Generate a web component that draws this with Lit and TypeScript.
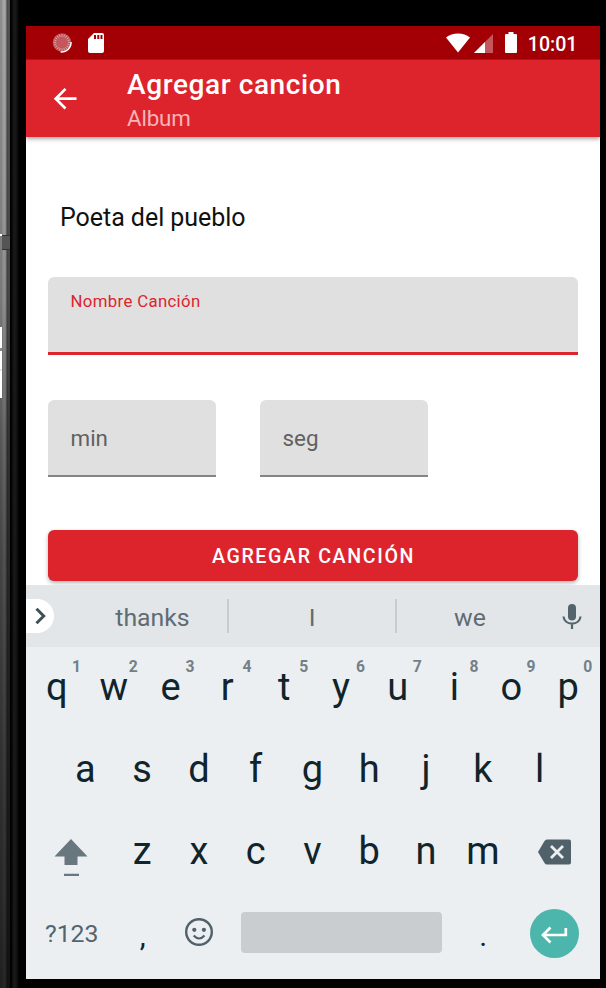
import { LitElement, html, css, svg } from "lit";
import { customElement, property } from "lit/decorators.js";

@customElement("phone-bezel")
class PhoneBezel extends LitElement {
  static styles = css`
    :host { display: block; position: relative; height: 988px; overflow: hidden;
      background: linear-gradient(90deg, #000 0 11px, #1a1a1a 14px, #161616 16px, #000 19px); }
    .metal { width: 10px; height: 988px;
      background: linear-gradient(180deg, #a6a6a6 0, #9a9a9a 180px, #8d8d8d 300px, #686868 430px, #505050 560px, #3a3a3a 750px, #262626 988px); }
    .shade { width: 10px; height: 988px;
      background: linear-gradient(90deg, rgba(0,0,0,.15) 0 2px, rgba(0,0,0,0) 3px 5px, rgba(0,0,0,.15) 6px, rgba(0,0,0,.55) 7px 8px, rgba(0,0,0,.45) 9px, rgba(0,0,0,.6) 10px); }
    .seam { position: absolute; left: 2px; top: 235px; width: 8px; height: 13px; background: #555;
      border-top: 1px solid #333; border-bottom: 1px solid #333; }
    .notch { position: absolute; left: 0; top: 327px; width: 2px; height: 71px; background: #fff; }
    .tick { position: absolute; left: 0; top: 348px; width: 2px; height: 3px; background: #888; }
    .tick.faint { top: 369px; height: 2px; background: #e6e6e6; }
    .dot { position: absolute; left: 0; top: 234px; width: 2px; height: 2px; background: #fff; }
  `;
  render() {
    return html`<div class="metal"><div class="shade"></div></div>
      <div class="seam"></div><div class="dot"></div><div class="notch"></div><div class="tick"></div><div class="tick faint"></div>`;
  }
}

@customElement("status-bar")
class StatusBar extends LitElement {
  static styles = css`
    :host { display: flex; height: 33px; background: #a30005; align-items: center; padding: 0 22.500px 0 26px;
      border-bottom: 1px solid #bd1217; box-sizing: content-box; color: #fff; font: 500 19.600px/33px Roboto, sans-serif; }
    svg { display: block; flex: none; }
    .sync { margin-right: 15px; }
    .wifi { margin: 0 3.500px 0 auto; }
    .cell { margin-right: 12px; }
    .batt { margin-right: 11px; }
    .time { height: 33px; padding-top: 2px; box-sizing: border-box; }
  `;
  render() {
    const rays = Array.from({ length: 20 }, (_, i) => svg`<line x1="10" y1="1.2" x2="10" y2="3.6" transform="rotate(${i * 18} 10 9.5)"/>`);
    return html`
      <svg class="sync" width="20" height="20" viewBox="0 0 20 20">
        <circle cx="10" cy="9.500" r="9.300" fill="#c3575b"/>
        <g stroke="#dda3a5" stroke-width=".9">${rays}</g>
        <path d="M19 9A9.300 9.300 0 0 1 8.500 18.900" fill="none" stroke="#fff" stroke-width="1.400"/>
      </svg>
      <svg width="18" height="20" viewBox="0 0 18 20"><path fill="#fff" fill-rule="evenodd" d="M7 0h8q2 0 2 2v16q0 2-2 2H3q-2 0-2-2V6zM7 2v4h2V2zm3.300 0v4h2V2zm3.200 0v4h2V2z"/></svg>
      <svg class="wifi" width="24" height="20" viewBox="0 0 24 20"><path fill="#fff" d="M12 19.500 0 4.500Q5 .5 12 .5t12 4z"/></svg>
      <svg class="cell" width="19" height="20" viewBox="0 0 19 20"><path fill="#c3575b" d="M19 1v19H0z"/><path fill="#fff" d="M11 9v11H0z"/></svg>
      <svg class="batt" width="12" height="21" viewBox="0 0 12 21"><path fill="#fff" d="M3.500 0h5v2H11q1 0 1 1v17q0 1-1 1H1q-1 0-1-1V3q0-1 1-1h2.500z"/></svg>
      <span class="time">10:01</span>`;
  }
}

@customElement("top-bar")
class TopBar extends LitElement {
  static styles = css`
    :host { display: flex; height: 77px; background: #dd242c; color: #fff; box-shadow: 0 2px 4px rgba(0,0,0,.35);
      font-family: Roboto, sans-serif; position: relative; }
    svg { margin: 27px 0 0 27px; width: 24px; height: 24px; flex: none; }
    .titles { margin-left: 50px; padding-top: 8px; }
    .title { font-size: 28px; font-weight: 500; line-height: 34px; white-space: nowrap; letter-spacing: .600px; }
    .sub { font-size: 22.4px; line-height: 32px; color: #f5b4b7; letter-spacing: -.2px; }
  `;
  render() {
    return html`
      <svg viewBox="0 0 24 24"><path d="M23.500 11.700H3M12.500 1.900 2.700 11.700 12.500 21.500" fill="none" stroke="#fff" stroke-width="2.700"/></svg>
      <div class="titles"><div class="title">Agregar cancion</div><div class="sub">Album</div></div>`;
  }
}

@customElement("text-field")
class TextField extends LitElement {
  @property() label = "";
  @property({ type: Boolean, reflect: true }) active = false;
  static styles = css`
    :host { display: block; height: 77px; box-sizing: border-box; background: #e0e0e0; border-radius: 6px 6px 0 0;
      border-bottom: 2px solid #858585; padding: 23px 22.500px 0; color: #606060; font: 22.4px/30px Roboto, sans-serif; }
    :host([active]) { height: 78px; border-bottom: 3px solid #dd242c; padding-top: 13px; color: #dd242c; font-size: 16.8px; line-height: 22px; letter-spacing: .340px; }
  `;
  render() { return html`<span>${this.label}</span>`; }
}

@customElement("song-form")
class SongForm extends LitElement {
  static styles = css`
    :host { display: block; height: 448px; background: #fff; padding: 0 22px; box-sizing: border-box; font-family: Roboto, sans-serif; overflow: hidden; }
    .artist { padding: 65px 12px 0; font-size: 25px; line-height: 32px; color: #111; height: 140px; box-sizing: border-box; letter-spacing: -.04px; }
    .times { display: flex; gap: 44px; margin-top: 45px; }
    .times text-field { width: 168px; }
    .add { display: block; width: 100%; height: 51px; margin-top: 53px; border: 0; border-radius: 6px; background: #dd242c;
      color: #fff; font: 500 19.6px/51px Roboto, sans-serif; letter-spacing: 1.640px; text-align: center; padding: 1px 0 0 1px;
      box-shadow: 0 2px 4px rgba(0,0,0,.3); }
  `;
  render() {
    return html`
      <div class="artist">Poeta del pueblo</div>
      <text-field label="Nombre Canción" active></text-field>
      <div class="times"><text-field label="min"></text-field><text-field label="seg"></text-field></div>
      <button class="add">AGREGAR CANCIÓN</button>`;
  }
}

@customElement("soft-keyboard")
class SoftKeyboard extends LitElement {
  static styles = css`
    :host { display: block; height: 394px; background: #ebeff2; font-family: Roboto, sans-serif; color: #10242c; position: relative; }
    .bar { height: 62px; background: #e2e6e9; display: flex; align-items: center; color: #5f6c72; font-size: 24.8px; line-height: 34px; }
    .more { width: 28px; height: 34px; background: #fff; border-radius: 0 17px 17px 0; flex: none; }
    .word { text-align: center; padding-top: 3px; }
    .first { width: 151px; margin-left: 23px; margin-right: -1px; }
    .mid { width: 166px; }
    .last { width: 146px; }
    .rule { width: 2px; height: 34px; background: #c8cccf; }
    .mic { margin: 1px 0 0 19px; }
    .row { display: flex; height: 82px; padding: 0 3px; justify-content: center; }
    .key { width: 56.800px; position: relative; text-align: center; font-size: 38px; line-height: 80px; text-indent: -1px; }
    .mark { font-size: 30px; line-height: 86px; text-indent: 0; }
    .hint { position: absolute; left: 39px; width: 17px; top: 10px; font-size: 15.700px; line-height: 20px; font-weight: 700; color: #748086; text-indent: 0; }
    .wide { width: 85.200px; display: flex; justify-content: center; align-items: center; }
    .shift { margin: 12px 1px 0 0; }
    .sym { font-size: 24.800px; color: #55646c; line-height: 80px; }
    .icon { width: 56.800px; display: flex; justify-content: center; align-items: center; padding-bottom: 4px; box-sizing: border-box; height: 82px; }
    .space { width: 201px; margin: 19px 13px 0; height: 41px; border-radius: 4px; background: #c9cdd0; flex: none; }
    .enter { width: 49px; height: 49px; border-radius: 50%; background: #4db6ac; margin-bottom: 2px; }
    svg { flex: none; display: block; }
  `;
  key(c: string, n = "") { return html`<div class="key">${c}${n ? html`<span class="hint">${n}</span>` : ""}</div>`; }
  render() {
    return html`
      <div class="bar">
        <div class="more"><svg width="28" height="34" viewBox="0 0 28 34"><path d="m10.500 9.800 7.200 7.200-7.200 7.200" fill="none" stroke="#3f5059" stroke-width="3"/></svg></div>
        <div class="word first">thanks</div><div class="rule"></div>
        <div class="word mid">I</div><div class="rule"></div><div class="word last">we</div>
        <svg class="mic" width="20" height="26" viewBox="0 0 20 26"><rect x="6" y="0" width="8" height="16.500" rx="4" fill="#55646c"/><path d="M1.500 12.500C2 17 5.500 19.600 10 19.600s8-2.600 8.500-7.100M10 19.600v5.400" fill="none" stroke="#55646c" stroke-width="2.200"/></svg>
      </div>
      <div class="row">${[..."qwertyuiop"].map((c, i) => this.key(c, String((i + 1) % 10)))}</div>
      <div class="row">${[..."asdfghjkl"].map((c) => this.key(c))}</div>
      <div class="row">
        <div class="wide"><svg class="shift" width="34" height="38" viewBox="0 0 34 38"><path fill="#68767d" d="M17 0 33.500 17.500h-10V26h-13v-8.500H.5zM10 34.700h15v2.300H10z"/></svg></div>
        ${[..."zxcvbnm"].map((c) => this.key(c))}
        <div class="wide"><svg width="34" height="26" viewBox="0 0 34 26"><path fill="#50616a" d="M10 .5h22q2 0 2 2v21q0 2-2 2H10q-1.500 0-2.500-1.500L1 13 7.500 2Q8.500.5 10 .5z"/><path d="m14 7 12 12m0-12L14 19" stroke="#ebeff2" stroke-width="2.800"/></svg></div>
      </div>
      <div class="row">
        <div class="wide sym">?123</div>
        <div class="key mark">,</div>
        <div class="icon"><svg width="28" height="28" viewBox="0 0 28 28"><circle cx="14" cy="14" r="12.800" fill="none" stroke="#50616a" stroke-width="2.400"/><circle cx="9.300" cy="11.800" r="2.100" fill="#50616a"/><circle cx="18.900" cy="11.800" r="2.100" fill="#50616a"/><path d="M8.700 17.500q5.400 6 10.800 0" fill="none" stroke="#50616a" stroke-width="2.200"/></svg></div>
        <div class="space"></div>
        <div class="key mark">.</div>
        <div class="wide"><div class="enter"><svg width="49" height="49" viewBox="0 0 49 49"><path d="M35.800 19v7H13M20.500 18.500 13 26l7.500 7.500" fill="none" stroke="#fff" stroke-width="2.700"/></svg></div></div>
      </div>`;
  }
}

@customElement("app-root")
class AppRoot extends LitElement {
  static styles = css`
    :host { display: grid; grid-template-columns: 26px 574px 6px; width: 606px; height: 988px; background: #000; overflow: hidden; }
    .screen { margin-top: 26px; height: 953px; overflow: hidden; display: flex; flex-direction: column; }
    status-bar, top-bar, song-form, soft-keyboard { flex: none; }
  `;
  render() {
    return html`<phone-bezel></phone-bezel>
      <div class="screen"><status-bar></status-bar><top-bar></top-bar><song-form></song-form><soft-keyboard></soft-keyboard></div>`;
  }
}
